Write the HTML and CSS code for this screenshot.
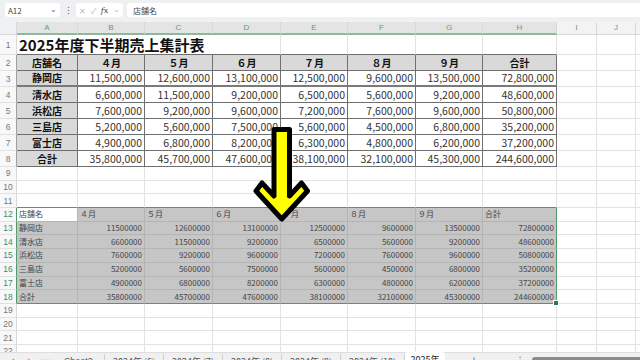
FILE: index.html
```html
<!DOCTYPE html>
<html lang="ja">
<head>
  <meta charset="UTF-8">
  <meta name="viewport" content="width=device-width, initial-scale=1.0">
  <title>2025年度下半期売上集計表</title>
  <link rel="stylesheet" href="styles.css">
</head>
<body>

<div class="app">

  <div class="formula-bar">
    <div class="name-box">A12<span class="chev">&#8964;</span></div>
    <span class="dots">&#8942;</span>
    <div class="fx-box">
      <span class="ico">&#10005;</span><span class="ico">&#10003;</span><span class="fx">fx</span><span class="ico chev">&#8964;</span>
    </div>
    <div class="formula-input">店舗名</div>
  </div>
  <div class="bar-gap"></div>

  <div class="sheet">
    <div class="row hdr">
      <span class="corner"></span>
      <span class="ch sel">A</span><span class="ch sel">B</span><span class="ch sel">C</span><span class="ch sel">D</span>
      <span class="ch sel">E</span><span class="ch sel">F</span><span class="ch sel">G</span><span class="ch sel">H</span>
      <span class="ch">I</span><span class="ch">J</span><span class="ch"></span>
    </div>

    <div class="row r1">
      <span class="rh">1</span>
      <span class="title tb">2025年度下半期売上集計表</span>
      <span class="tb"></span><span class="tb"></span><span class="tb"></span><span class="tb"></span>
      <span></span><span></span><span></span>
    </div>

    <div class="row rt">
      <span class="rh tl">2</span>
      <span class="t th">店舗名</span><span class="t th">４月</span><span class="t th">５月</span><span class="t th">６月</span>
      <span class="t th">７月</span><span class="t th">８月</span><span class="t th">９月</span><span class="t th">合計</span>
      <span></span><span></span><span></span>
    </div>
    <div class="row rt first">
      <span class="rh tl">3</span>
      <span class="t th">静岡店</span><span class="t n">11,500,000</span><span class="t n">12,600,000</span><span class="t n">13,100,000</span>
      <span class="t n">12,500,000</span><span class="t n">9,600,000</span><span class="t n">13,500,000</span><span class="t n">72,800,000</span>
      <span></span><span></span><span></span>
    </div>
    <div class="row rt">
      <span class="rh tl">4</span>
      <span class="t th">清水店</span><span class="t n">6,600,000</span><span class="t n">11,500,000</span><span class="t n">9,200,000</span>
      <span class="t n">6,500,000</span><span class="t n">5,600,000</span><span class="t n">9,200,000</span><span class="t n">48,600,000</span>
      <span></span><span></span><span></span>
    </div>
    <div class="row rt">
      <span class="rh tl">5</span>
      <span class="t th">浜松店</span><span class="t n">7,600,000</span><span class="t n">9,200,000</span><span class="t n">9,600,000</span>
      <span class="t n">7,200,000</span><span class="t n">7,600,000</span><span class="t n">9,600,000</span><span class="t n">50,800,000</span>
      <span></span><span></span><span></span>
    </div>
    <div class="row rt">
      <span class="rh tl">6</span>
      <span class="t th">三島店</span><span class="t n">5,200,000</span><span class="t n">5,600,000</span><span class="t n">7,500,000</span>
      <span class="t n">5,600,000</span><span class="t n">4,500,000</span><span class="t n">6,800,000</span><span class="t n">35,200,000</span>
      <span></span><span></span><span></span>
    </div>
    <div class="row rt">
      <span class="rh tl">7</span>
      <span class="t th">富士店</span><span class="t n">4,900,000</span><span class="t n">6,800,000</span><span class="t n">8,200,000</span>
      <span class="t n">6,300,000</span><span class="t n">4,800,000</span><span class="t n">6,200,000</span><span class="t n">37,200,000</span>
      <span></span><span></span><span></span>
    </div>
    <div class="row rt">
      <span class="rh tl">8</span>
      <span class="t th">合計</span><span class="t n">35,800,000</span><span class="t n">45,700,000</span><span class="t n">47,600,000</span>
      <span class="t n">38,100,000</span><span class="t n">32,100,000</span><span class="t n">45,300,000</span><span class="t n">244,600,000</span>
      <span></span><span></span><span></span>
    </div>

    <div class="row">
      <span class="rh">9</span>
      <span></span><span></span><span></span><span></span><span></span><span></span><span></span><span></span><span></span><span></span><span></span>
    </div>
    <div class="row">
      <span class="rh">10</span>
      <span></span><span></span><span></span><span></span><span></span><span></span><span></span><span></span><span></span><span></span><span></span>
    </div>
    <div class="row">
      <span class="rh">11</span>
      <span class="gt"></span><span class="gt"></span><span class="gt"></span><span class="gt"></span>
      <span class="gt"></span><span class="gt"></span><span class="gt"></span><span class="gt"></span>
      <span></span><span></span><span></span>
    </div>

    <div class="row">
      <span class="rh gl">12</span>
      <span class="s act">店舗名</span><span class="s">４月</span><span class="s">５月</span><span class="s">６月</span>
      <span class="s">７月</span><span class="s">８月</span><span class="s">９月</span><span class="s gr">合計</span>
      <span></span><span></span><span></span>
    </div>
    <div class="row">
      <span class="rh gl">13</span>
      <span class="s">静岡店</span><span class="s n">11500000</span><span class="s n">12600000</span><span class="s n">13100000</span>
      <span class="s n">12500000</span><span class="s n">9600000</span><span class="s n">13500000</span><span class="s n gr">72800000</span>
      <span></span><span></span><span></span>
    </div>
    <div class="row">
      <span class="rh gl">14</span>
      <span class="s">清水店</span><span class="s n">6600000</span><span class="s n">11500000</span><span class="s n">9200000</span>
      <span class="s n">6500000</span><span class="s n">5600000</span><span class="s n">9200000</span><span class="s n gr">48600000</span>
      <span></span><span></span><span></span>
    </div>
    <div class="row">
      <span class="rh gl">15</span>
      <span class="s">浜松店</span><span class="s n">7600000</span><span class="s n">9200000</span><span class="s n">9600000</span>
      <span class="s n">7200000</span><span class="s n">7600000</span><span class="s n">9600000</span><span class="s n gr">50800000</span>
      <span></span><span></span><span></span>
    </div>
    <div class="row">
      <span class="rh gl">16</span>
      <span class="s">三島店</span><span class="s n">5200000</span><span class="s n">5600000</span><span class="s n">7500000</span>
      <span class="s n">5600000</span><span class="s n">4500000</span><span class="s n">6800000</span><span class="s n gr">35200000</span>
      <span></span><span></span><span></span>
    </div>
    <div class="row">
      <span class="rh gl">17</span>
      <span class="s">富士店</span><span class="s n">4900000</span><span class="s n">6800000</span><span class="s n">8200000</span>
      <span class="s n">6300000</span><span class="s n">4800000</span><span class="s n">6200000</span><span class="s n gr">37200000</span>
      <span></span><span></span><span></span>
    </div>
    <div class="row">
      <span class="rh gl">18</span>
      <span class="s gb">合計</span><span class="s n gb">35800000</span><span class="s n gb">45700000</span><span class="s n gb">47600000</span>
      <span class="s n gb">38100000</span><span class="s n gb">32100000</span><span class="s n gb">45300000</span><span class="s n gb gr handle">244600000</span>
      <span></span><span></span><span></span>
    </div>

    <div class="row">
      <span class="rh">19</span>
      <span></span><span></span><span></span><span></span><span></span><span></span><span></span><span></span><span></span><span></span><span></span>
    </div>
    <div class="row">
      <span class="rh">20</span>
      <span></span><span></span><span></span><span></span><span></span><span></span><span></span><span></span><span></span><span></span><span></span>
    </div>
    <div class="row">
      <span class="rh">21</span>
      <span></span><span></span><span></span><span></span><span></span><span></span><span></span><span></span><span></span><span></span><span></span>
    </div>
    <div class="row">
      <span class="rh">22</span>
      <span></span><span></span><span></span><span></span><span></span><span></span><span></span><span></span><span></span><span></span><span></span>
    </div>
  </div>

  <div class="tabbar">
    <span class="nav">&#8249;</span><span class="nav">&#8250;</span><span class="nav">&#8943;</span>
    <span class="tab first-tab">Sheet2</span>
    <span class="tab">2024年 (6)</span>
    <span class="tab">2024年 (7)</span>
    <span class="tab">2024年 (8)</span>
    <span class="tab">2024年 (9)</span>
    <span class="tab wide">2024年 (10)</span>
    <span class="tab active">2025年</span>
    <span class="nav add">+</span>
    <span class="nav more">&#8942;</span>
    <span class="scroll"></span>
  </div>

  <!-- big yellow arrow drawn over the sheet -->
  <svg class="arrow" width="70" height="110" viewBox="0 0 70 110">
    <path d="M24 9.5 L39.5 9.5 L39.5 76 L51.5 63 L57.5 71 L31.75 99 L6 71 L12 63 L24 76 Z"
          fill="#ffff00" stroke="#000" stroke-width="5" stroke-linejoin="round"/>
  </svg>

</div>

</body>
</html>
```

FILE: styles.css
```css
* {
  box-sizing: border-box;
}

html, body {
  margin: 0;
  padding: 0;
}

body {
  width: 640px;
  height: 360px;
  overflow: hidden;
  background-color: #fff;
  font-family: "Noto Sans CJK JP", "Liberation Sans", sans-serif;
  color: #222;
}

.app {
  position: relative;
  height: 374px;
  display: flex;
  flex-direction: column;
}

/* formula bar */
.formula-bar {
  height: 20px;
  flex: none;
  display: flex;
  align-items: center;
  gap: 4px;
  padding-left: 5px;
  background-color: #eef0f2;
}

.name-box {
  width: 55px;
  height: 14px;
  display: flex;
  align-items: center;
  justify-content: space-between;
  padding: 0 3px 0 3px;
  background-color: #fff;
  border-radius: 3px;
  font-size: 8px;
  color: #444;
}

.chev {
  font-size: 8px;
  color: #666;
  line-height: 8px;
  margin-top: -3px;
}

.dots {
  width: 8px;
  text-align: center;
  font-size: 9px;
  color: #555;
}

.fx-box {
  width: 47px;
  height: 14px;
  display: flex;
  align-items: center;
  justify-content: space-between;
  padding: 0 3px;
  background-color: #fff;
  border-radius: 3px;
}

.ico {
  font-size: 8px;
  color: #bbb;
}

.fx {
  font-family: "DejaVu Serif", serif;
  font-style: italic;
  font-size: 8px;
  color: #444;
}

.formula-input {
  flex: 1;
  height: 14px;
  display: flex;
  align-items: center;
  padding-left: 6px;
  background-color: #fff;
  border-radius: 3px 0 0 3px;
  font-size: 8px;
  color: #444;
}

.bar-gap {
  height: 2px;
  flex: none;
  background-color: #eef0f2;
}

/* grid */
.sheet {
  flex: 1;
  overflow: hidden;
}

.row {
  display: grid;
  grid-template-columns: 17px 61px 67px 68px 68px 67px 68px 67px 74px 40px 39px 1fr;
  height: 13.7px;
}

.row > span {
  display: flex;
  align-items: center;
  padding: 0 2px;
  border-right: 1px solid #e2e2e2;
  border-bottom: 1px solid #e2e2e2;
  font-size: 8px;
  line-height: 10px;
  color: #444;
  white-space: nowrap;
  overflow: hidden;
}

.row.hdr {
  height: 13px;
}

.row.hdr > span {
  justify-content: center;
  background-color: #f3f3f3;
  border-right-color: #d8d8d8;
  border-bottom-color: #d8d8d8;
  font-family: "Liberation Sans", sans-serif;
  color: #888;
}

.row.hdr > .sel {
  background-color: #e4e4e4;
  border-bottom: 2px solid #8bb99a;
  color: #5e9e73;
}

.row.hdr > .corner {
  background-color: #eef0f2;
}

.row > .rh {
  justify-content: center;
  padding: 0;
  background-color: #f8f8f8;
  border-right-color: #d8d8d8;
  font-family: "Liberation Sans", sans-serif;
  font-size: 8.5px;
  color: #777;
}

.row > .rh.tl {
  border-right-color: #a0a0a0;
}

.row > .rh.gl {
  color: #3f8f5d;
  border-right-color: #4f9a6a;
}

/* title row */
.row.r1 {
  height: 20px;
}

.row > .title {
  grid-column: span 4;
  padding-top: 1px;
  font-size: 15px;
  line-height: 18px;
  font-weight: bold;
  color: #111;
}

.row > .tb {
  border-bottom-color: #6f6f6f;
}

/* summary table */
.row.rt {
  height: 16px;
}

.row > .t {
  border-right-color: #6f6f6f;
  border-bottom-color: #6f6f6f;
  font-size: 10.5px;
  line-height: 14px;
  color: #333;
}

.row.first > .t {
  border-bottom: 2px solid #7a7a7a;
}

.row > .th {
  justify-content: center;
  background-color: #d9d9d9;
  font-size: 10px;
  font-weight: bold;
  color: #111;
}

.row > .n {
  justify-content: flex-end;
}

/* selected copy */
.row > .s {
  background-color: #c6c6c6;
  border-right-color: #b4b4b4;
  border-bottom-color: #b4b4b4;
  color: #444;
}

.row > .s.n {
  justify-content: flex-end;
}

.row > .act {
  background-color: #fff;
}

.row > .gt {
  border-bottom-color: #4f9a6a;
}

.row > .gr {
  border-right-color: #4f9a6a;
}

.row > .gb {
  border-bottom-color: #4f9a6a;
}

.row > .handle {
  position: relative;
  overflow: visible;
}

.handle::after {
  content: "";
  position: absolute;
  right: -3px;
  bottom: -3px;
  width: 4px;
  height: 4px;
  background-color: #2f7d4c;
  border: 1px solid #fff;
}

/* sheet tabs */
.tabbar {
  height: 22px;
  flex: none;
  display: flex;
  align-items: flex-start;
  padding-left: 5px;
  background-color: #f0f0f0;
  border-top: 1px solid #dedede;
  font-size: 9px;
  line-height: 11px;
  color: #555;
}

.nav {
  width: 16px;
  padding-top: 2px;
  text-align: center;
  font-family: "DejaVu Sans", sans-serif;
  font-size: 9px;
  color: #666;
}

.tab {
  width: 59px;
  height: 16px;
  margin-top: 1px;
  padding-top: 2px;
  text-align: center;
  border-right: 1px solid #cfcfcf;
}

.first-tab {
  width: 52px;
  font-family: "Liberation Sans", sans-serif;
}

.tab.wide {
  width: 64px;
}

.tab.active {
  width: 40px;
  height: 22px;
  margin-top: -1px;
  padding-top: 2px;
  background-color: #fff;
  border-right: none;
  border-radius: 3px 3px 0 0;
  color: #222;
}

.add {
  margin-left: 21px;
  font-size: 10px;
}

.more {
  margin-left: 30px;
}

.scroll {
  flex: 1;
  height: 6px;
  margin-top: 4px;
  margin-left: 4px;
  background-color: #8a8a8a;
  border-radius: 3px 0 0 3px;
}

/* overlay arrow */
.arrow {
  position: absolute;
  left: 250px;
  top: 120px;
}
```
